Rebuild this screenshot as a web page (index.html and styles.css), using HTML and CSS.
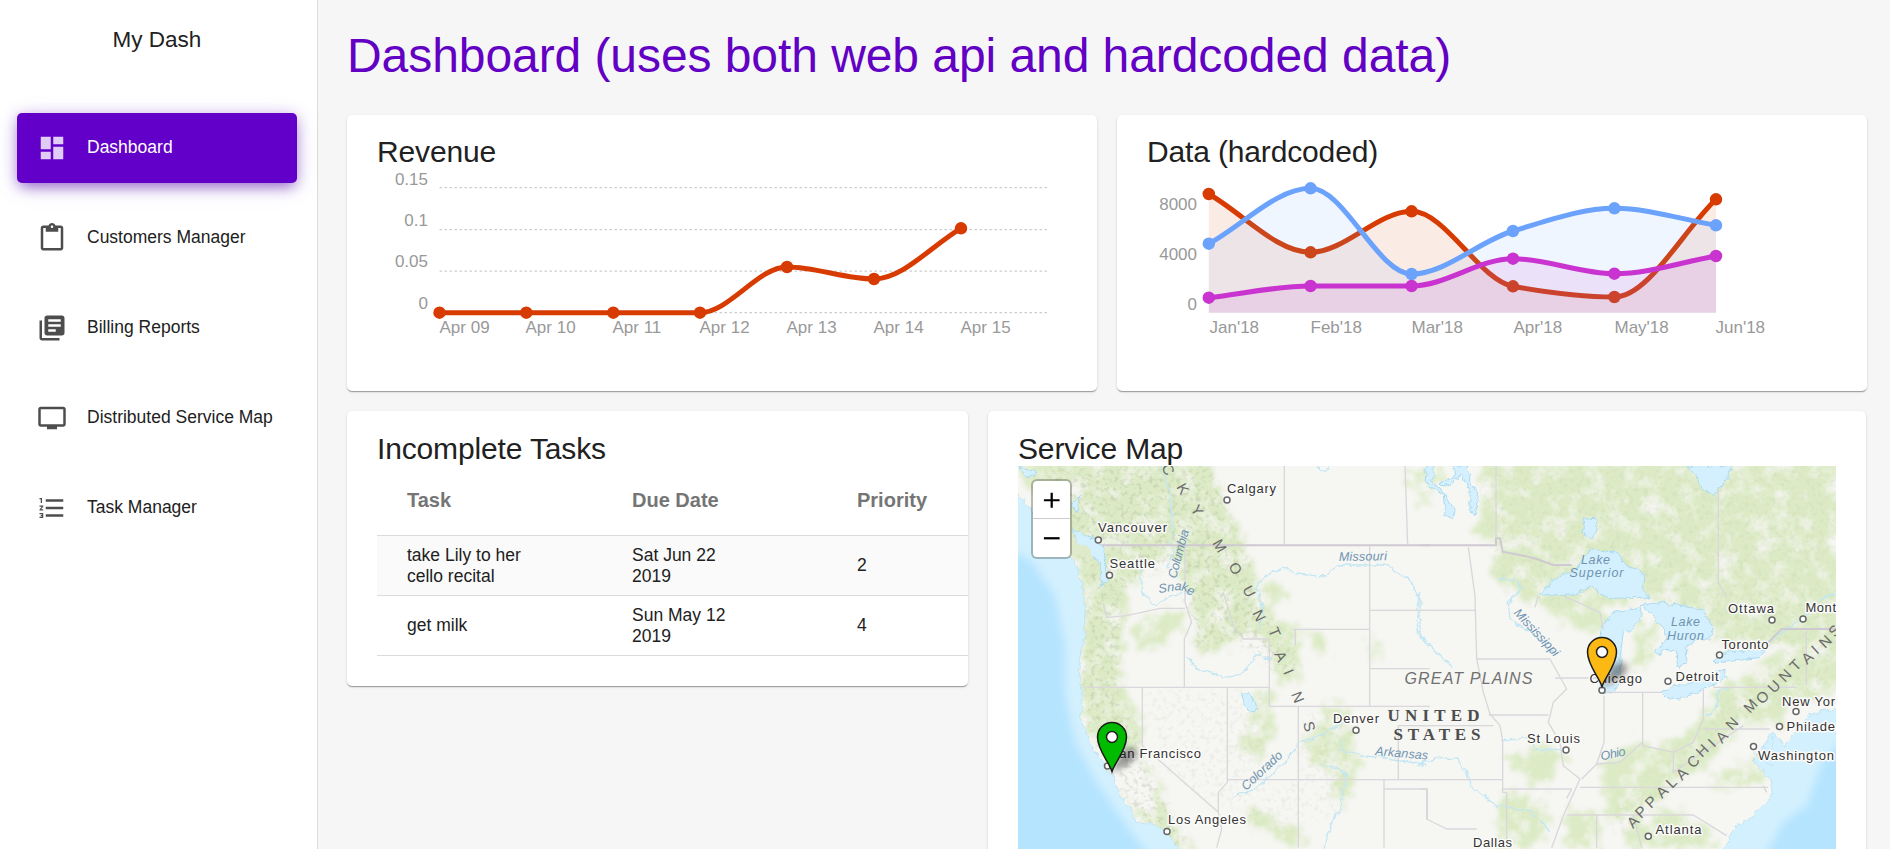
FILE: index.html
```html
<!DOCTYPE html>
<html lang="en">
<head>
<meta charset="utf-8">
<title>My Dash</title>
<link rel="stylesheet" href="styles.css">
</head>
<body>
<div class="app">
  <aside class="sidebar">
    <div class="brand">My Dash</div>
    <nav class="nav">
      <a class="nav-item active"><svg class="icon" viewBox="0 0 24 24"><path d="M3 13h8V3H3v10zm0 8h8v-6H3v6zm10 0h8V11h-8v10zm0-18v6h8V3h-8z"/></svg><span>Dashboard</span></a>
      <a class="nav-item"><svg class="icon" viewBox="0 0 24 24"><path d="M19 2h-4.18C14.4.84 13.3 0 12 0c-1.3 0-2.4.84-2.82 2H5c-1.1 0-2 .9-2 2v16c0 1.1.9 2 2 2h14c1.1 0 2-.9 2-2V4c0-1.1-.9-2-2-2zm-7 0c.55 0 1 .45 1 1s-.45 1-1 1-1-.45-1-1 .45-1 1-1zm7 18H5V4h2v3h10V4h2v16z"/></svg><span>Customers Manager</span></a>
      <a class="nav-item"><svg class="icon" viewBox="0 0 24 24"><path d="M4 6H2v14c0 1.1.9 2 2 2h14v-2H4V6zm16-4H8c-1.1 0-2 .9-2 2v12c0 1.1.9 2 2 2h12c1.1 0 2-.9 2-2V4c0-1.1-.9-2-2-2zm-1 9H9V9h10v2zm-4 4H9v-2h6v2zm4-8H9V5h10v2z"/></svg><span>Billing Reports</span></a>
      <a class="nav-item"><svg class="icon" viewBox="0 0 24 24"><path d="M21 3H3c-1.11 0-2 .89-2 2v12c0 1.1.89 2 2 2h5v2h8v-2h5c1.1 0 1.99-.9 1.99-2L23 5c0-1.11-.9-2-2-2zm0 14H3V5h18v12z"/></svg><span>Distributed Service Map</span></a>
      <a class="nav-item"><svg class="icon" viewBox="0 0 24 24"><path d="M2 17h2v.5H3v1h1v.5H2v1h3v-4H2v1zm1-9h1V4H2v1h1v3zm-1 3h1.8L2 13.1v.9h3v-1H3.2L5 10.9V10H2v1zm5-6v2h14V5H7zm0 14h14v-2H7v2zm0-6h14v-2H7v2z"/></svg><span>Task Manager</span></a>
    </nav>
  </aside>

  <main class="main">
    <h1 class="page-title">Dashboard (uses both web api and hardcoded data)</h1>

    <div class="row charts">
      <section class="card">
        <h2 class="card-title">Revenue</h2>
        <svg class="chart" viewBox="377 170 690 180">
          <g class="grid"><path d="M439.5 187.5H1047M439.5 229.5H1047M439.5 271H1047M439.5 312.5H1047"/></g>
          <g class="label end"><text x="428" y="185">0.15</text><text x="428" y="226.3">0.1</text><text x="428" y="267">0.05</text><text x="428" y="309">0</text></g>
          <g class="label"><text x="439.5" y="333">Apr 09</text><text x="525.5" y="333">Apr 10</text><text x="612.5" y="333">Apr 11</text><text x="699.5" y="333">Apr 12</text><text x="786.5" y="333">Apr 13</text><text x="873.5" y="333">Apr 14</text><text x="960.5" y="333">Apr 15</text></g>
          <path class="line red" d="M439.5 312.7H700C729 312.7 758 267 787 267C816 267 845 279 874 279C903 279 932 245.2 961 228.3"/>
          <path class="dots red" d="M439.5 312.7h0M526.3 312.7h0M613.3 312.7h0M700 312.7h0M787 267h0M874 279h0M961 228.3h0"/>
        </svg>
      </section>
      <section class="card">
        <h2 class="card-title">Data (hardcoded)</h2>
        <svg class="chart" viewBox="1147 170 690 180">
          <g class="label end"><text x="1197" y="210">8000</text><text x="1197" y="260">4000</text><text x="1197" y="309.7">0</text></g>
          <g class="label"><text x="1209.5" y="333">Jan'18</text><text x="1310.5" y="333">Feb'18</text><text x="1411.5" y="333">Mar'18</text><text x="1513.5" y="333">Apr'18</text><text x="1614.5" y="333">May'18</text><text x="1715.5" y="333">Jun'18</text></g>
          <path class="area red" d="M1208.8 312.7V194C1242.7 213.4 1276.7 252.3 1310.6 252.3C1344.3 252.3 1377.9 211.3 1411.6 211.3C1445.4 211.3 1479.2 280.1 1513 286.3C1546.8 292.5 1580.6 297 1614.4 297C1648.3 297 1682.1 231.9 1716 199.3V312.7Z"/>
          <path class="line red" d="M1208.8 194C1242.7 213.4 1276.7 252.3 1310.6 252.3C1344.3 252.3 1377.9 211.3 1411.6 211.3C1445.4 211.3 1479.2 280.1 1513 286.3C1546.8 292.5 1580.6 297 1614.4 297C1648.3 297 1682.1 231.9 1716 199.3"/>
          <path class="dots red" d="M1208.8 194h0M1310.6 252.3h0M1411.6 211.3h0M1513 286.3h0M1614.4 297h0M1716 199.3h0"/>
          <path class="area blue" d="M1208.8 312.7V243.7C1242.7 225.2 1276.7 188.3 1310.6 188.3C1344.3 188.3 1377.9 274 1411.6 274C1445.4 274 1479.2 240.9 1513 231C1546.8 221.1 1580.6 208.3 1614.4 208.3C1648.3 208.3 1682.1 219.6 1716 225.3V312.7Z"/>
          <path class="line blue" d="M1208.8 243.7C1242.7 225.2 1276.7 188.3 1310.6 188.3C1344.3 188.3 1377.9 274 1411.6 274C1445.4 274 1479.2 240.9 1513 231C1546.8 221.1 1580.6 208.3 1614.4 208.3C1648.3 208.3 1682.1 219.6 1716 225.3"/>
          <path class="dots blue" d="M1208.8 243.7h0M1310.6 188.3h0M1411.6 274h0M1513 231h0M1614.4 208.3h0M1716 225.3h0"/>
          <path class="area purple" d="M1208.8 312.7V297.7C1242.7 293.8 1276.7 286 1310.6 286H1411.6C1445.4 286 1479.2 258.7 1513 258.7C1546.8 258.7 1580.6 273.7 1614.4 273.7C1648.3 273.7 1682.1 261.9 1716 256V312.7Z"/>
          <path class="line purple" d="M1208.8 297.7C1242.7 293.8 1276.7 286 1310.6 286H1411.6C1445.4 286 1479.2 258.7 1513 258.7C1546.8 258.7 1580.6 273.7 1614.4 273.7C1648.3 273.7 1682.1 261.9 1716 256"/>
          <path class="dots purple" d="M1208.8 297.7h0M1310.6 286h0M1411.6 286h0M1513 258.7h0M1614.4 273.7h0M1716 256h0"/>
        </svg>
      </section>
    </div>

    <div class="row details">
      <section class="card tasks">
        <h2 class="card-title">Incomplete Tasks</h2>
        <div class="table">
          <div class="tr head"><div>Task</div><div>Due Date</div><div>Priority</div></div>
          <div class="tr odd"><div>take Lily to her<br>cello recital</div><div>Sat Jun 22<br>2019</div><div>2</div></div>
          <div class="tr"><div>get milk</div><div>Sun May 12<br>2019</div><div>4</div></div>
        </div>
      </section>

      <section class="card service">
        <h2 class="card-title">Service Map</h2>
        <div class="map">
          <svg class="map-svg" viewBox="1018 467 818 384">
            <defs>
              <filter id="veg" x="-5%" y="-5%" width="110%" height="110%" color-interpolation-filters="sRGB">
                <feTurbulence type="fractalNoise" baseFrequency=".03" numOctaves="4" seed="4" result="n"/>
                <feDisplacementMap in="SourceGraphic" in2="n" scale="80" xChannelSelector="R" yChannelSelector="G" result="d"/>
                <feGaussianBlur in="d" stdDeviation="7" result="b"/>
                <feTurbulence type="fractalNoise" baseFrequency=".018" numOctaves="5" seed="9"/>
                <feColorMatrix values="0 0 0 0 0  0 0 0 0 0  0 0 0 0 0  2.4 0 0 0 -.3" result="m"/>
                <feComposite in="b" in2="m" operator="in"/>
              </filter>
              <filter id="rough" x="-5%" y="-5%" width="110%" height="110%" color-interpolation-filters="sRGB">
                <feTurbulence type="fractalNoise" baseFrequency=".05" numOctaves="3" seed="2" result="n"/>
                <feDisplacementMap in="SourceGraphic" in2="n" scale="18" xChannelSelector="R" yChannelSelector="G"/>
              </filter>
              <filter id="relief" x="0" y="0" width="100%" height="100%" color-interpolation-filters="sRGB">
                <feTurbulence type="fractalNoise" baseFrequency=".07" numOctaves="3" seed="7"/>
                <feColorMatrix values="0 0 0 0 .62  0 0 0 0 .65  0 0 0 0 .52  4 0 0 0 -2" result="m"/>
                <feGaussianBlur in="SourceAlpha" stdDeviation="14" result="a"/>
                <feComposite in="m" in2="a" operator="in"/>
              </filter>
              <filter id="soft" x="-20%" y="-20%" width="140%" height="140%"><feGaussianBlur stdDeviation="12"/></filter>
              <filter id="pinblur" x="-50%" y="-50%" width="200%" height="200%"><feGaussianBlur stdDeviation="3"/></filter>
            </defs>
            <rect class="land" x="1018" y="467" width="818" height="384"/>

            <!-- vegetation, west -->
            <g transform="translate(1010 460) scale(.33333)">
              <g class="veg" filter="url(#veg)">
                <path d="M0 0H600L640 120L700 240L760 400L800 480L880 500L870 680L800 660L770 560L720 520L660 560L560 590L550 430L500 300L400 330L350 400L330 680L400 760L390 880L300 860L240 840L210 700L220 400L190 280Z"/>
                <path d="M370 500L480 450L520 480L470 560L380 580Z"/>
                <path d="M390 880L450 980L480 1090L560 1166H480L450 1100L370 1070L330 980L380 1050L450 1060Z"/>
                <path d="M740 700L780 690L800 820L740 900L670 870L720 800ZM880 500L940 530L960 600L920 560ZM1070 530L1110 550L1110 600L1080 610Z"/>
                <path d="M950 720L1010 740L1050 920L1010 1040L970 1020L960 920L890 900L880 840L930 800Z"/>
                <path d="M730 1050L820 1090L900 1120L860 1166L760 1120L700 1080ZM1180 30L1300 30V90L1230 110ZM760 370L840 380L820 430L760 430Z"/>
              </g>
              <path class="relief" filter="url(#relief)" d="M100 20H600L760 420L880 640L800 640L680 540L560 580L500 300L350 380L320 680L400 860L480 1060L540 1166H450L370 1060L240 830L210 680L230 400L190 200Z"/>
              <path class="relief faint" filter="url(#relief)" d="M400 690H770V1000L620 1060L460 920ZM880 760L1050 760L1000 1060L860 1100L760 1120L660 1060L860 960Z"/>
            </g>

            <!-- vegetation, east -->
            <g transform="translate(1420 460) scale(.33333)">
              <g class="veg" filter="url(#veg)">
                <path d="M180 0H1300V540L1180 560L900 560L860 470L690 420L560 440L540 520L440 500L350 440L250 390L210 350L230 250L170 250Z"/>
                <path d="M1300 520V700L1100 720L1080 800L960 800L880 900L740 1000L560 1100L560 980L700 880L850 780L880 690L1040 600Z"/>
                <path d="M650 500L720 490L700 600L640 640ZM260 900L360 850L440 890L400 970L320 990ZM240 1000L380 1030L400 1100L330 1166H230Z"/>
                <path d="M540 930L640 840L700 880L620 980L560 1000ZM440 1050L540 1070V1166H440ZM640 1060L800 1060L880 1120L900 1166H620ZM870 960L1020 880L1040 960L920 1000ZM0 120L40 140L20 160L0 150Z"/>
              </g>
              <path class="relief faint" filter="url(#relief)" d="M180 20H1270V600L900 560L690 420L350 440L220 340ZM560 1060L850 780L1040 620L1240 560V680L960 800L740 1020L600 1150Z"/>
            </g>

            <!-- coast and water, west -->
            <g transform="translate(1010 460) scale(.33333)">
              <path class="shelf" filter="url(#rough)" d="M-20 40L60 150L140 250L190 300L215 370L226 440L222 540L205 640L218 700L212 780L240 850L270 900L310 960L330 1010L370 1060L375 1092L430 1095L470 1120L515 1180H-20Z"/>
              <path class="deep" filter="url(#soft)" d="M-60 260L60 300L135 410L165 560L165 700L195 850L260 970L350 1100L440 1220H-60Z"/>
              <path class="river" filter="url(#rough)" d="M530 590L560 630L610 640L640 655L690 650L740 590L790 605M440 440L395 400L390 320M440 440L480 410L540 400M740 380L770 350L820 325L860 345L910 350L945 350L985 318H1135L1165 345L1205 365L1225 420L1222 520L1260 560M740 380L760 450L750 510M670 1010L740 990L830 900L870 850L920 835L1000 790M990 840L995 875L1060 890L1150 900L1250 920M930 920L980 925L1010 950L990 1050L965 1090L945 1166M450 20L480 100L490 280L470 330M920 25L940 35L960 25"/>
              <path class="lake" filter="url(#rough)" d="M695 705L715 700L740 740L730 760L705 740ZM190 210L280 260L295 370L275 380L270 310L200 250ZM30 25L80 40L50 60ZM185 140L210 110L200 160Z"/>
              <path class="veg solid" filter="url(#rough)" d="M80 170L150 220L240 270L250 300L180 280L90 220Z"/>
              <path class="country" d="M275 259H1260"/>
              <path class="border" d="M823 20V255M1185 20L1193 258M1079 260V742M1079 454H1260M850 511H1079M856 511V560M1079 629H1260M778 540V742H1260M523 685H778M225 685H778M523 685V540L545 490L525 430V260M397 685V860L625 1060M652 685V970L625 1000V1060L635 1110L620 1166M865 742V1166M652 962H1260M1165 800V962M1165 800H1260M1122 962V1166M1122 990H1252V1080M280 435L290 475L350 470L450 448L525 448M640 400L670 500L700 540L778 540"/>
            </g>

            <!-- coast and water, east -->
            <g transform="translate(1420 460) scale(.33333)">
              <path class="shelf" filter="url(#rough)" d="M1290 740L1170 765L1120 830L1095 860L1060 820L1030 860L1000 900L1050 960L1058 1010L1000 1070L940 1110L905 1180H1290Z"/>
              <path class="deep" filter="url(#soft)" d="M1290 830L1210 900L1160 1040L1090 1090L1030 1200H1290Z"/>
              <g class="lake" filter="url(#rough)">
                <path d="M358 408L400 360L470 330L510 270L590 280L620 320L670 340L670 390L690 420L660 415L580 418L540 405L515 380L470 405Z"/>
                <path d="M490 180L525 178L530 215L515 240L490 220ZM805 20H938L920 60L895 95L880 112L850 90Z"/>
                <path d="M535 560L545 500L580 460L660 445L665 470L640 510L610 520L600 600L605 660L580 700L550 705L535 650Z"/>
                <path d="M660 440L700 430L790 440L850 455L880 510L870 540L830 540L800 560V610L775 625L765 575L730 570L715 590L705 580L740 540L725 500L690 460Z"/>
                <path d="M725 700L760 680L830 670L910 630L920 655L860 690L780 720L735 715ZM885 600L910 580L1000 572L1040 570L1020 595L950 605L890 612Z"/>
                <path d="M20 20H45L35 70L60 90L105 150L100 180L75 170L70 110L15 70ZM100 20H145L150 70L175 110L170 165L150 160L150 90L125 50L70 85L60 75L105 50Z"/>
              </g>
              <path class="river" filter="url(#rough)" d="M0 400V530L50 580L95 625M235 360L290 365L305 390L265 430L270 480L330 520L400 580M0 915L60 895L110 900L140 940L150 980L230 1040L330 1055L390 1115M250 845L330 835L345 870L420 875M860 770L895 740L890 700L930 685M1040 560L1090 515L1150 480L1220 410L1260 405M1060 830L1050 900L1030 860M1000 880L1060 920"/>
              <path class="country" d="M0 259H228V238H240L248 278L310 290L350 300L400 318L455 318M1260 510H1085L1040 555"/>
              <path class="border" d="M228 20V238M145 265L165 410L170 600L190 700L210 765L240 800L248 845V1000H260V1166M0 454H165M172 600H390L440 690L400 730L385 790L420 850L430 920L480 960L430 1070L395 1166M206 768H385M0 800H220M0 962H248M0 990H20V1080L80 1110H170M248 990H455L440 1018M405 657H540M552 710V850L530 915L485 960M552 700H725M668 700V860L760 880L820 850L850 780V690M480 985H1045M440 1068H820L920 1130M530 1068V1166M640 1068L665 1166M880 685H1130M850 810H1050M1159 515V680M895 95V370L920 415M530 915L600 910L668 850M355 410L345 445M430 410L540 460L550 510M1040 1000L1030 980M760 880V940L970 800"/>
            </g>

            <g class="dot"><circle cx="1227" cy="501" r="3"/><circle cx="1098.300" cy="541" r="3"/><circle cx="1109.500" cy="576.300" r="3"/><circle cx="1107.500" cy="767" r="3"/><circle cx="1167" cy="832.500" r="3"/><circle cx="1356" cy="731.300" r="3"/><circle cx="1566" cy="751" r="3"/><circle cx="1772" cy="621" r="3"/><circle cx="1803" cy="620" r="3"/><circle cx="1719.500" cy="656" r="3"/><circle cx="1602" cy="691.300" r="3"/><circle cx="1668" cy="682.300" r="3"/><circle cx="1796" cy="712.500" r="3"/><circle cx="1779.500" cy="727.500" r="3"/><circle cx="1753.500" cy="747.500" r="3"/><circle cx="1648.300" cy="837.300" r="3"/></g>

            <g class="city">
              <text x="1227" y="494" textLength="49">Calgary</text>
              <text x="1098" y="533" textLength="69">Vancouver</text>
              <text x="1109.500" y="569" textLength="45.500">Seattle</text>
              <text x="1110" y="758.700" textLength="91">San Francisco</text>
              <text x="1168" y="825" textLength="78">Los Angeles</text>
              <text x="1333" y="724" textLength="46">Denver</text>
              <text x="1527" y="744" textLength="53">St Louis</text>
              <text x="1473" y="847.500" textLength="39">Dallas</text>
              <text x="1728" y="614" textLength="46">Ottawa</text>
              <text x="1805.500" y="613" textLength="30.500">Mont</text>
              <text x="1721.500" y="650" textLength="47">Toronto</text>
              <text x="1589.500" y="684" textLength="52.500">Chicago</text>
              <text x="1675.500" y="682" textLength="43">Detroit</text>
              <text x="1782" y="706.500" textLength="53">New Yor</text>
              <text x="1786.500" y="732" textLength="48.500">Philade</text>
              <text x="1758" y="760.500" textLength="76">Washington</text>
              <text x="1655.500" y="834.500" textLength="46">Atlanta</text>
            </g>
            <g class="water">
              <text x="1339" y="562" textLength="48" transform="rotate(-1 1339 562)">Missouri</text>
              <text x="1375" y="756" textLength="53" transform="rotate(5 1375 756)">Arkansas</text>
              <text x="1513.500" y="614" textLength="60" transform="rotate(47 1513 614)">Mississippi</text>
              <text x="1246" y="792" textLength="51" transform="rotate(-43 1246 792)">Colorado</text>
              <text x="1176" y="580" textLength="50" transform="rotate(-75 1176 580)">Columbia</text>
              <text x="1159 1167.500 1174.500 1181 1186" y="594 592.500 591 591.500 594" rotate="-8 -4 2 12 25">Snake</text>
              <text x="1601.500" y="761.500" textLength="25" transform="rotate(-12 1601 761)">Ohio</text>
              <text x="1581" y="564.500" textLength="29">Lake</text><text x="1569.500" y="578" textLength="54">Superior</text>
              <text x="1671" y="627" textLength="29">Lake</text><text x="1667" y="640.500" textLength="37">Huron</text>
            </g>
            <text class="plains" x="1404.500" y="684.500" textLength="128">GREAT PLAINS</text>
            <g class="nation"><text x="1387.500" y="722" textLength="92">UNITED</text><text x="1393.500" y="740.500" textLength="87">STATES</text></g>
            <g class="range">
              <text x="1161 1176 1190 1212 1228 1242 1252 1268 1274 1283 1291 1303" y="468 488 510 544 567 590 614 631 655 673 695 724" rotate="62 60 57 60 60 62 64 67 65 67 69 75">CKYMOUNTAINS</text>
              <text x="1633 1641 1651 1662 1672 1682 1693 1702 1714 1722 1732 1750 1762 1774 1785 1796 1807 1817 1825 1835" y="830 820 810 800 790 782 770 759 749 745 732 715 706 695 684 673 666 656 650 639" rotate="-45 -44 -44 -44 -45 -45 -45 -45 -45 -46 -47 -47 -45 -46 -46 -46 -42 -42 -44 -48">APPALACHIANMOUNTAINS</text>
            </g>

            <g transform="translate(1112 773)"><path class="pin-shadow" filter="url(#pinblur)" d="M0 0L10-21Q22-29 25-20Q26-10 0 0Z"/><path class="pin green" d="M0-.5C-3-10-14.500-22-14.500-35A14.500 14.500 0 0 1 14.500-35C14.500-22 3-10 0-.5Z"/><circle class="pin-hole" cy="-35" r="5.500"/></g>
            <g transform="translate(1602 688)"><path class="pin-shadow" filter="url(#pinblur)" d="M0 0L10-21Q22-29 25-20Q26-10 0 0Z"/><path class="pin amber" d="M0-.5C-3-10-14.500-22-14.500-35A14.500 14.500 0 0 1 14.500-35C14.500-22 3-10 0-.5Z"/><circle class="pin-hole" cy="-35" r="5.500"/></g>
          </svg>
          <div class="zoom"><svg viewBox="0 0 36 37"><path d="M10.500 19h15.500M18.200 11.500v15"/></svg><svg viewBox="0 0 36 37"><path d="M10.500 19h15.500"/></svg></div>
        </div>
      </section>
    </div>
  </main>
</div>
</body>
</html>
```

FILE: styles.css
```css
* { box-sizing: border-box; }
body {
  margin: 0;
  height: 849px;
  overflow: hidden;
  background: #f6f6f6;
  color: #212121;
  font-family: "Liberation Sans", Arial, sans-serif;
}
.app { display: flex; height: 849px; overflow: hidden; }
.sidebar { width: 318px; flex: none; background: #fff; border-right: 1px solid #dcdcdc; }
.brand { padding-top: 26px; height: 103px; padding-right: 3px; text-align: center; font-size: 22.5px; line-height: 27px; }
.nav { display: flex; flex-direction: column; gap: 20px; padding: 9.6px 20px 0 17px; }
.nav-item {
  display: flex; align-items: center; gap: 20px;
  height: 70px; padding-left: 20px; border-radius: 5px;
  font-size: 17.5px;
}
.nav-item.active {
  background: #6200c9; color: #fff;
  box-shadow: 0 5px 25px rgba(98, 0, 201, .14), 0 9px 12px -6px rgba(70, 0, 150, .3), 0 3px 14px rgba(80, 0, 170, .32);
}
.icon { width: 30px; height: 30px; fill: #4d4d4d; }
.active .icon { fill: #e0ccf4; }

.main { flex: 1; min-width: 0; padding: 26px 24px 0 29px; }
.page-title { margin: 0 0 29px; height: 60px; line-height: 60px; font-size: 48px; font-weight: 400; letter-spacing: -.07px; color: #6200c4; white-space: nowrap; }
.row { display: flex; gap: 20px; align-items: flex-start; margin-bottom: 20px; }
.card {
  background: #fff; border-radius: 5px; padding: 19px 30px 30px;
  box-shadow: 0 2px 1px -1px rgba(0,0,0,.2), 0 1px 1px rgba(0,0,0,.14), 0 1px 3px rgba(0,0,0,.12);
}
.charts .card { flex: 1; height: 276px; }
.card-title { margin: 0; font-size: 30px; line-height: 36px; font-weight: 400; letter-spacing: -.15px; }
.details .card { padding-top: 20px; }
.details .card-title { height: 35px; }
.chart { display: block; width: 690px; height: 180px; overflow: visible; }

.grid path { stroke: rgba(0,0,0,.2); stroke-width: 1.25; stroke-dasharray: 2.5px; fill: none; }
.label { font-size: 17px; fill: #999; }
.end { text-anchor: end; }
.line { fill: none; stroke-width: 5; }
.dots { fill: none; stroke-width: 12.500; stroke-linecap: round; }
.area { fill-opacity: .1; }
.line.red, .dots.red { stroke: #d73b02; }
.line.blue, .dots.blue { stroke: #6ba2fb; }
.line.purple, .dots.purple { stroke: #c933cf; }
.area.red { fill: #d73b02; }
.area.blue { fill: #6ba2fb; }
.area.purple { fill: #c933cf; }

.tasks { width: 621px; flex: none; overflow: hidden; }
.details .tasks { padding-right: 0; }
.table { font-size: 17.5px; line-height: 21px; }
.tr { display: grid; grid-template-columns: 225px 225px 1fr; align-items: center; height: 60px; padding-left: 30px; border-bottom: 1px solid #dcdcdc; }
.tr.odd { background: #fafafa; }
.tr.head { height: 70px; font-size: 20px; font-weight: 700; color: #757575; }

.service { flex: 1; min-width: 0; height: 520px; }
.map { position: relative; width: 818px; height: 420px; overflow: hidden; background: #f6f6f3; }
.map-svg { display: block; width: 818px; height: 384px; }
.land { fill: #f6f6f3; }
.veg { fill: #dcebc6; }
.veg.solid { fill: #dfeaca; }
.relief { fill: #000; opacity: .27; }
.relief.faint { opacity: .1; }
.shelf { fill: #d3f0fe; stroke: #b4dcf0; stroke-width: 2; }
.deep { fill: #b5e4ff; }
.lake { fill: #d4effd; stroke: #abdaf0; stroke-width: 3; }
.river { fill: none; stroke: #c2e6f4; stroke-width: 4; stroke-linejoin: round; }
.border { fill: none; stroke: #dad7dc; stroke-width: 4; stroke-linejoin: round; }
.country { fill: none; stroke: #cfc9d1; stroke-width: 6; }
.dot { fill: #fff; stroke: #666; stroke-width: 1.500; }
.city { font-size: 13px; fill: #333; stroke: #fbfbf9; stroke-width: 3px; stroke-linejoin: round; paint-order: stroke; }
.water { font-size: 12.5px; font-style: italic; fill: #6f93b0; }
.plains { font-size: 16px; font-style: italic; fill: #707070; }
.nation { font-family: "Liberation Serif", serif; font-size: 17px; font-weight: 700; fill: #4d4d4d; }
.range { font-size: 15px; fill: #6a6a6a; }
.pin { stroke: #1b1b1b; stroke-width: 1.500; }
.pin.green { fill: #0b0; }
.pin.amber { fill: #fdb913; }
.pin-hole { fill: #fff; stroke: #222; stroke-width: 1.500; }
.pin-shadow { fill: #000; opacity: .4; }
.zoom {
  position: absolute; left: 13px; top: 12.500px; width: 41px; height: 80px;
  display: flex; flex-direction: column;
  background: #fff; background-clip: padding-box;
  border: 2.500px solid rgba(0,0,0,.25); border-radius: 6px;
}
.zoom svg { flex: 1; width: 100%; min-height: 0; fill: none; stroke: #000; stroke-width: 2.200; }
.zoom svg + svg { border-top: 1px solid #ccc; }
```
